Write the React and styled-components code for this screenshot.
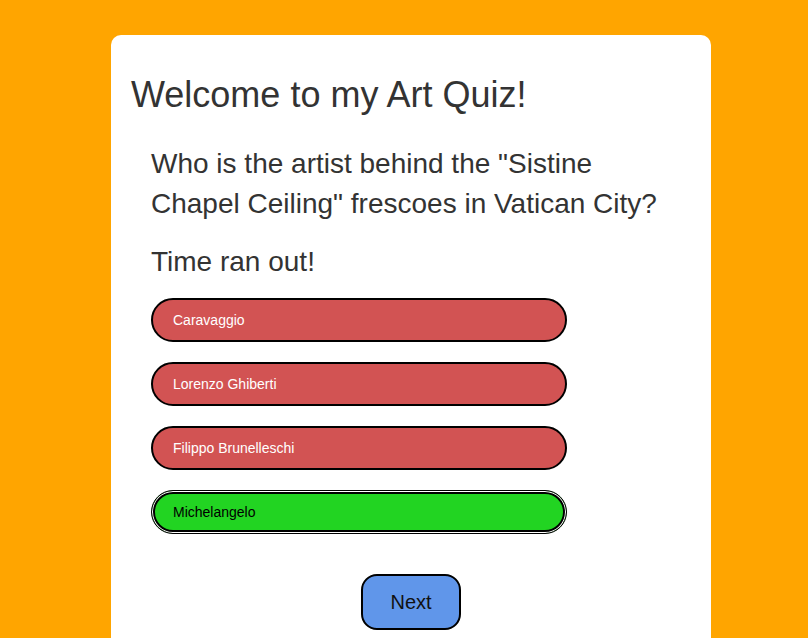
import React from "react";
import styled, { createGlobalStyle } from "styled-components";

const GlobalStyle = createGlobalStyle`
  html, body {
    margin: 0;
    padding: 0;
    background-color: #ffa500;
    font-family: "Liberation Sans", Arial, sans-serif;
  }
`;

const Page = styled.div`
  min-height: 638px;
  padding-top: 35px;
  box-sizing: border-box;
`;

const Card = styled.div`
  width: 600px;
  min-height: 640px;
  margin-left: 111px;
  padding: 20px;
  box-sizing: border-box;
  background-color: white;
  border-radius: 10px;
  color: #333;
`;

const Title = styled.h1`
  font-size: 36px;
  font-weight: 400;
  margin: 19px 0 28px;
`;

const QuizSection = styled.div`
  padding: 0 20px;
  display: flex;
  flex-direction: column;
`;

const Question = styled.div`
  font-size: 28px;
  line-height: 40px;
`;

const Status = styled.div`
  font-size: 28px;
  line-height: 40px;
  margin: 18px 0 16px;
`;

const AnswerList = styled.div`
  display: flex;
  flex-direction: column;
  gap: 20px;
`;

const Answer = styled.button`
  width: 416px;
  height: 44px;
  padding: 0 0 0 ${(props) => (props.correct ? "21px" : "20px")};
  text-align: left;
  font-family: "Liberation Sans", Arial, sans-serif;
  font-size: 14px;
  border-radius: 22px;
  box-sizing: border-box;
  border: ${(props) => (props.correct ? "1px" : "2px")} solid black;
  background-color: ${(props) => (props.correct ? "#22d422" : "#d25353")};
  color: ${(props) => (props.correct ? "black" : "white")};
  box-shadow: ${(props) =>
    props.correct ? "inset 0 0 0 1px white, inset 0 0 0 3px black" : "none"};
`;

const NextButton = styled.button`
  align-self: center;
  margin-top: 40px;
  width: 100px;
  height: 56px;
  font-family: "Liberation Sans", Arial, sans-serif;
  font-size: 20px;
  color: #111;
  background-color: #6096ea;
  border: 2px solid black;
  border-radius: 16px;
`;

const answers = [
  { text: "Caravaggio", correct: false },
  { text: "Lorenzo Ghiberti", correct: false },
  { text: "Filippo Brunelleschi", correct: false },
  { text: "Michelangelo", correct: true },
];

const App = () => {
  return (
    <Page>
      <GlobalStyle />
      <Card>
        <Title>Welcome to my Art Quiz!</Title>
        <QuizSection>
          <Question>
            Who is the artist behind the "Sistine Chapel Ceiling" frescoes in
            Vatican City?
          </Question>
          <Status>Time ran out!</Status>
          <AnswerList>
            {answers.map((a) => (
              <Answer key={a.text} correct={a.correct}>
                {a.text}
              </Answer>
            ))}
          </AnswerList>
          <NextButton>Next</NextButton>
        </QuizSection>
      </Card>
    </Page>
  );
};

export default App;
